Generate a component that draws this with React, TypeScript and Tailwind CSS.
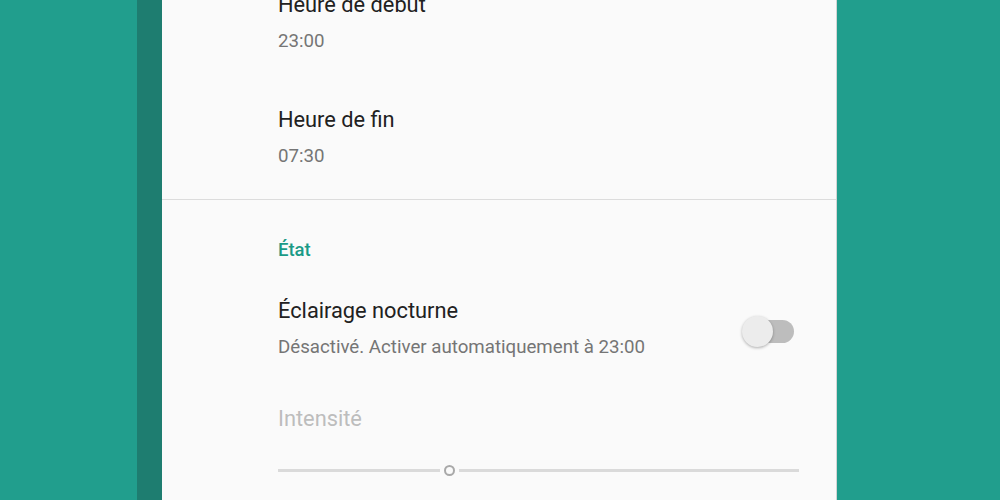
export default function App() {
  return (
    <div
      className="flex h-[500px] w-[1000px] overflow-hidden bg-[#219e8d]"
      style={{ fontFamily: "Roboto, 'Noto Sans', sans-serif" }}
    >
      <div className="w-[137px] shrink-0" />
      {/* darker edge of the window behind */}
      <div className="w-[25px] shrink-0 bg-[#1e7d70]" />

      <div className="w-[675px] shrink-0 border-r border-[#d4d4d4] bg-[#fafafa]">
        <div className="-mt-[8px] flex flex-col pl-[116px] pr-[37px]">
          {/* Schedule */}
          <div className="text-[21.8px] leading-[26px] text-[#212121]">Heure de début</div>
          <div className="mt-[12px] text-[18.7px] leading-[22px] text-[#757575]">23:00</div>

          <div className="mt-[55px] text-[21.8px] leading-[26px] text-[#212121]">Heure de fin</div>
          <div className="mt-[12px] text-[18.7px] leading-[22px] text-[#757575]">07:30</div>
        </div>

        <div className="mt-[32px] h-px bg-[#dcdcdc]" />

        <div className="flex flex-col pl-[116px] pr-[37px]">
          <div className="mt-[38px] text-[18.5px] font-medium leading-[24px] text-[#1a9a87]">État</div>

          <div className="mt-[36px] flex items-start justify-between">
            <div className="flex flex-col">
              <div className="text-[21.8px] leading-[26px] text-[#212121]">Éclairage nocturne</div>
              <div className="mt-[12px] text-[18.7px] leading-[22px] text-[#757575]">
                Désactivé. Activer automatiquement à 23:00
              </div>
            </div>
            <div className="relative mr-[5px] mt-[18px] h-[31px] w-[52px]">
              <div className="absolute right-0 top-[4px] h-[23px] w-[46px] rounded-full bg-[#bdbdbd]" />
              <div className="absolute left-0 top-0 h-[31px] w-[31px] rounded-full bg-[#ececec] shadow-[0_1px_3px_rgba(0,0,0,0.3)]" />
            </div>
          </div>

          <div className="mt-[48px] text-[21.8px] leading-[26px] text-[#bdbdbd]">Intensité</div>

          <div className="mt-[28px] flex h-[20px] items-center">
            <div className="h-[3px] w-[162px] bg-[#dadada]" />
            <div className="mx-[4px] h-[11px] w-[11px] rounded-full border-[2.5px] border-[#a9a9a9]" />
            <div className="h-[3px] flex-1 bg-[#dadada]" />
          </div>
        </div>
      </div>

      <div className="flex-1" />
    </div>
  );
}
